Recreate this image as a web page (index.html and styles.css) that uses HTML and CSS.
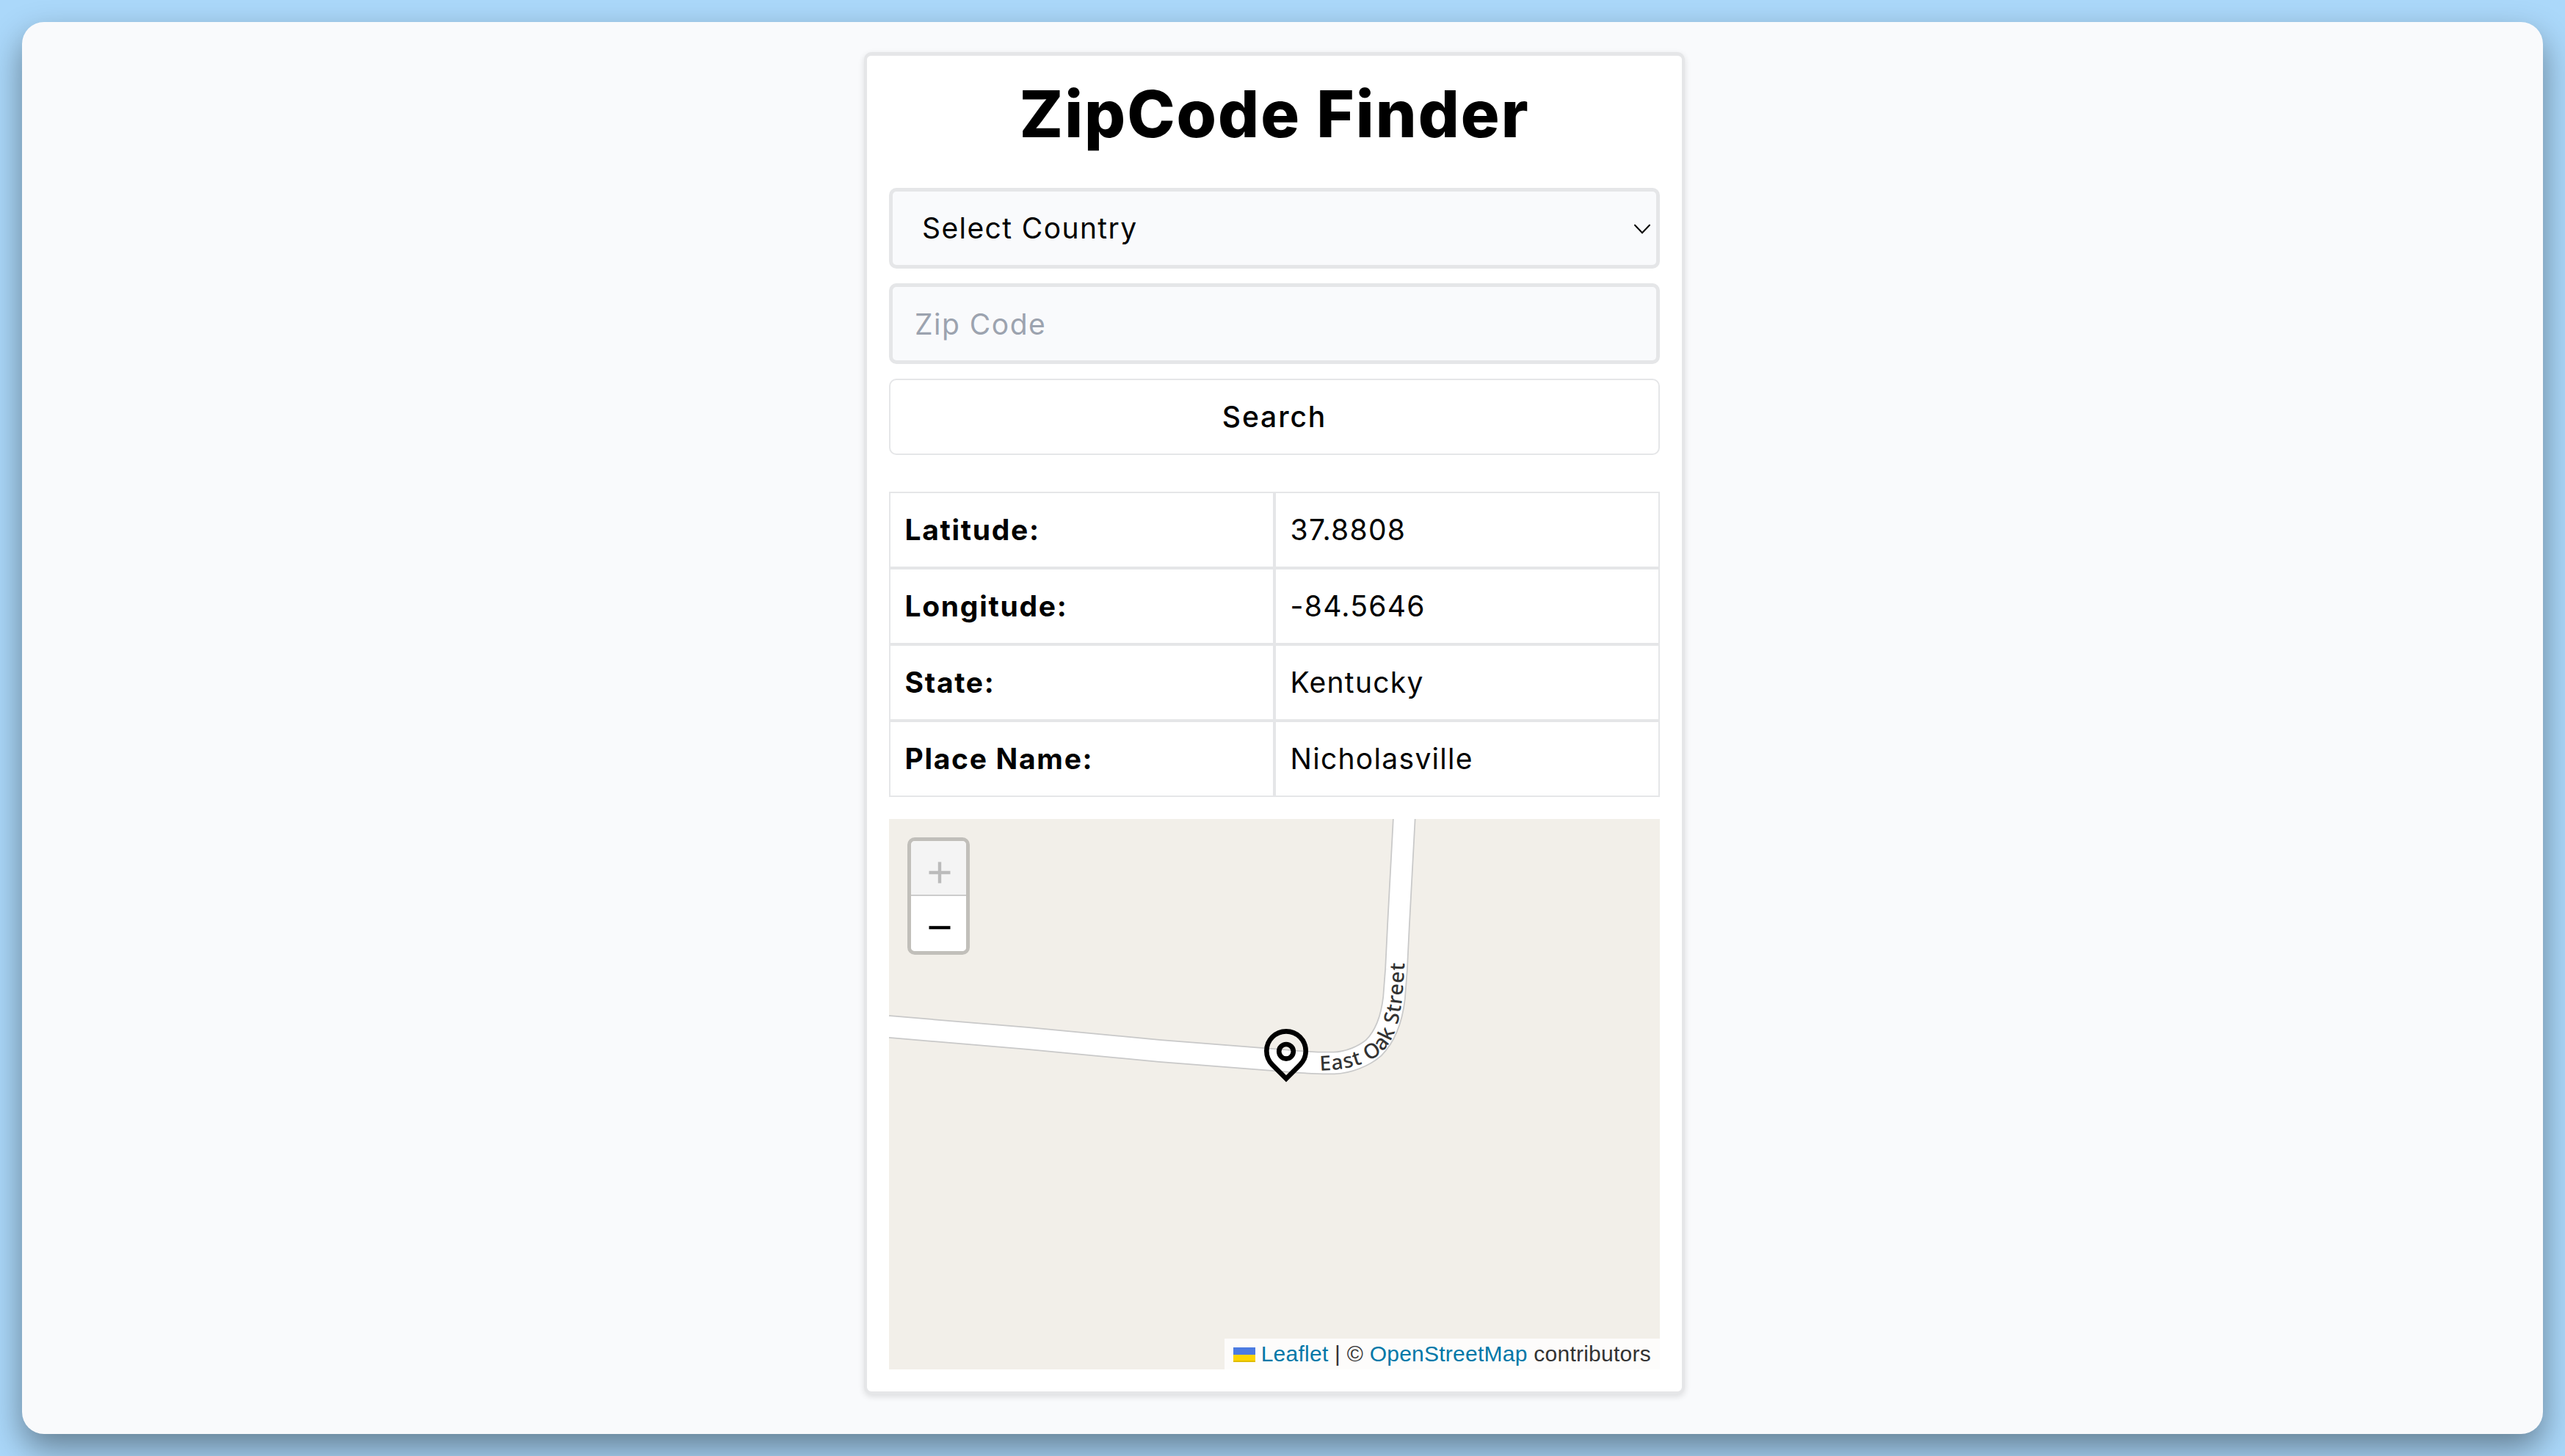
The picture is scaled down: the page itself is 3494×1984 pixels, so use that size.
FILE: index.html
```
<!DOCTYPE html>
<html lang="en">
<head>
<meta charset="utf-8">
<title>ZipCode Finder</title>
<link rel="stylesheet" href="styles.css">
</head>
<body>
<main class="window">
  <section class="card">
    <h1 class="title">ZipCode Finder</h1>
    <form class="form">
      <div class="select-wrap">
        <select class="field field-select" aria-label="Country">
          <option>Select Country</option>
        </select>
        <svg class="chevron" viewBox="0 0 24 14"><path d="M2 1.7 12 12.2 22 1.7"/></svg>
      </div>
      <input class="field field-input" type="text" placeholder="Zip Code">
      <button class="search" type="button">Search</button>
    </form>
    <dl class="result">
      <dt>Latitude:</dt><dd>37.8808</dd>
      <dt>Longitude:</dt><dd>-84.5646</dd>
      <dt>State:</dt><dd>Kentucky</dd>
      <dt>Place Name:</dt><dd>Nicholasville</dd>
    </dl>
    <div class="map">
      <svg class="tiles" viewBox="0 0 1050 750">
        <defs>
          <path id="road" d="M-10 282 0 283 190 299 369 316 541 329.5C570 332 590 333 606 332.5 626 332 647 323 660 312 678 294 685 270 688 244L691 205 694 144 702-5"/>
          <path id="label-line" d="M587 343C625 342 652 334 670 319 690 300 696 272 699 244 701 225 702 210 704 150"/>
        </defs>
        <use href="#road" class="road-casing"/>
        <use href="#road" class="road-fill"/>
        <text class="road-label"><textPath href="#label-line" textLength="218">East Oak Street</textPath></text>
      </svg>
      <svg class="pin" viewBox="0 0 64 76">
        <path d="M13.1 50.9A26.7 26.7 0 1 1 50.9 50.9L32 69.8Z"/>
        <circle cx="32" cy="32.8" r="9.8"/>
      </svg>
      <div class="zoom">
        <a class="zoom-btn zoom-off"><svg viewBox="0 0 30 30"><path d="M.5 15h29M15 .5v29"/></svg></a>
        <a class="zoom-btn"><svg viewBox="0 0 30 30"><path d="M.5 15h29"/></svg></a>
      </div>
      <div class="credit">
        <svg class="flag" viewBox="0 0 30 20"><path fill="#4c7be1" d="M0 0h30v10H0z"/><path fill="#ffd500" d="M0 10h30v8H0z"/><path fill="#e0bc00" d="M0 18h30v2H0z"/></svg>
        <span><a>Leaflet</a> | © <a>OpenStreetMap</a> contributors</span>
      </div>
    </div>
  </section>
</main>
</body>
</html>
```
FILE: styles.css
```
* { box-sizing: border-box; }

body {
  margin: 0;
  height: 1984px;
  padding: 30px;
  overflow: hidden;
  background: #abd8fa;
  color: #000;
  font: 400 39px/1.2 Inter, sans-serif;
  letter-spacing: 1.3px;
}

.window {
  height: 1924px;
  padding-top: 41px;
  border-radius: 30px;
  background: #f9fafc;
  box-shadow: 0 20px 46px rgba(0, 0, 0, .41);
}

.card {
  width: 1118px;
  height: 1829px;
  margin-left: 1147px;
  padding: 30px;
  border: 5px solid #e5e6e8;
  border-width: 5px 4px 4px;
  border-radius: 10px;
  background: #fff;
  box-shadow: 0 3px 8px rgba(0, 0, 0, .12);
}

.title {
  margin: 0 0 52px;
  font-size: 88px;
  line-height: 98px;
  font-weight: 800;
  letter-spacing: 2px;
  text-align: center;
}

.form {
  display: flex;
  flex-direction: column;
  gap: 20px;
}

.select-wrap { position: relative; }

.field, .search {
  display: block;
  width: 100%;
  margin: 0;
  border: 5px solid #e5e6e8;
  border-radius: 10px;
  font: inherit;
  letter-spacing: inherit;
  color: #000;
}

.field {
  height: 110px;
  background: #f9fafc;
  appearance: none;
  outline: none;
}

.field-select { padding: 0 40px; letter-spacing: 1.4px; }
.field-input { padding: 0 30px; letter-spacing: 1.5px; }
.field-input::placeholder { color: #9ca3af; opacity: 1; }

.chevron {
  position: absolute;
  right: 12px;
  top: 49px;
  width: 24px;
  height: 14px;
  fill: none;
  stroke: #000;
  stroke-width: 2;
  stroke-linecap: round;
}

.search {
  height: 104px;
  border-width: 2px;
  background: #fff;
  font-weight: 500;
  letter-spacing: 1.9px;
}

.result {
  display: grid;
  grid-template-columns: 1fr 1fr;
  grid-auto-rows: 104px;
  margin: 50px 0 30px;
}

.result dt, .result dd {
  margin: 0;
  padding: 0 19.5px;
  border: 2px solid #e5e6e8;
  line-height: 100px;
}

.result dt {
  font-weight: 700;
  letter-spacing: 1.7px;
}

.map {
  position: relative;
  height: 750px;
  overflow: hidden;
  background: #f2efe9;
}

.tiles { display: block; width: 1050px; height: 750px; }
.road-casing, .road-fill { fill: none; stroke: #c9c9c9; stroke-width: 31.5; }
.road-fill { stroke: #fff; stroke-width: 28; }

.road-label {
  font: 500 28px "Noto Sans", sans-serif;
  letter-spacing: 0;
  fill: #333;
}

.pin {
  position: absolute;
  left: 508.5px;
  top: 284px;
  width: 64px;
  height: 76px;
  fill: none;
  stroke: #000;
  stroke-width: 6.6;
}

.zoom {
  position: absolute;
  left: 25px;
  top: 25px;
  width: 85px;
  border: 5px solid rgba(0, 0, 0, .2);
  border-radius: 10px;
  background-clip: padding-box;
}

.zoom-btn {
  display: flex;
  align-items: center;
  justify-content: center;
  height: 75px;
  padding: 11px 0 0 2px;
  background: #fff;
  border-radius: 0 0 5px 5px;
}

.zoom-off {
  padding-top: 13px;
  border-bottom: 2px solid #ccc;
  border-radius: 5px 5px 0 0;
  background: #f4f4f4;
}

.zoom-btn svg { width: 30px; height: 30px; stroke: #000; stroke-width: 4.4; }
.zoom-off svg { stroke: #bbb; }

.credit {
  position: absolute;
  right: 0;
  bottom: 0;
  display: flex;
  align-items: center;
  gap: 8px;
  height: 42px;
  padding: 0 12px;
  background: rgba(255, 255, 255, .8);
  color: #333;
  font: 400 30px/42px "Liberation Sans", Arial, sans-serif;
  letter-spacing: .25px;
  white-space: nowrap;
}

.credit a { color: #0078a8; }
.flag { width: 30px; height: 20px; margin-top: 2px; }
```
